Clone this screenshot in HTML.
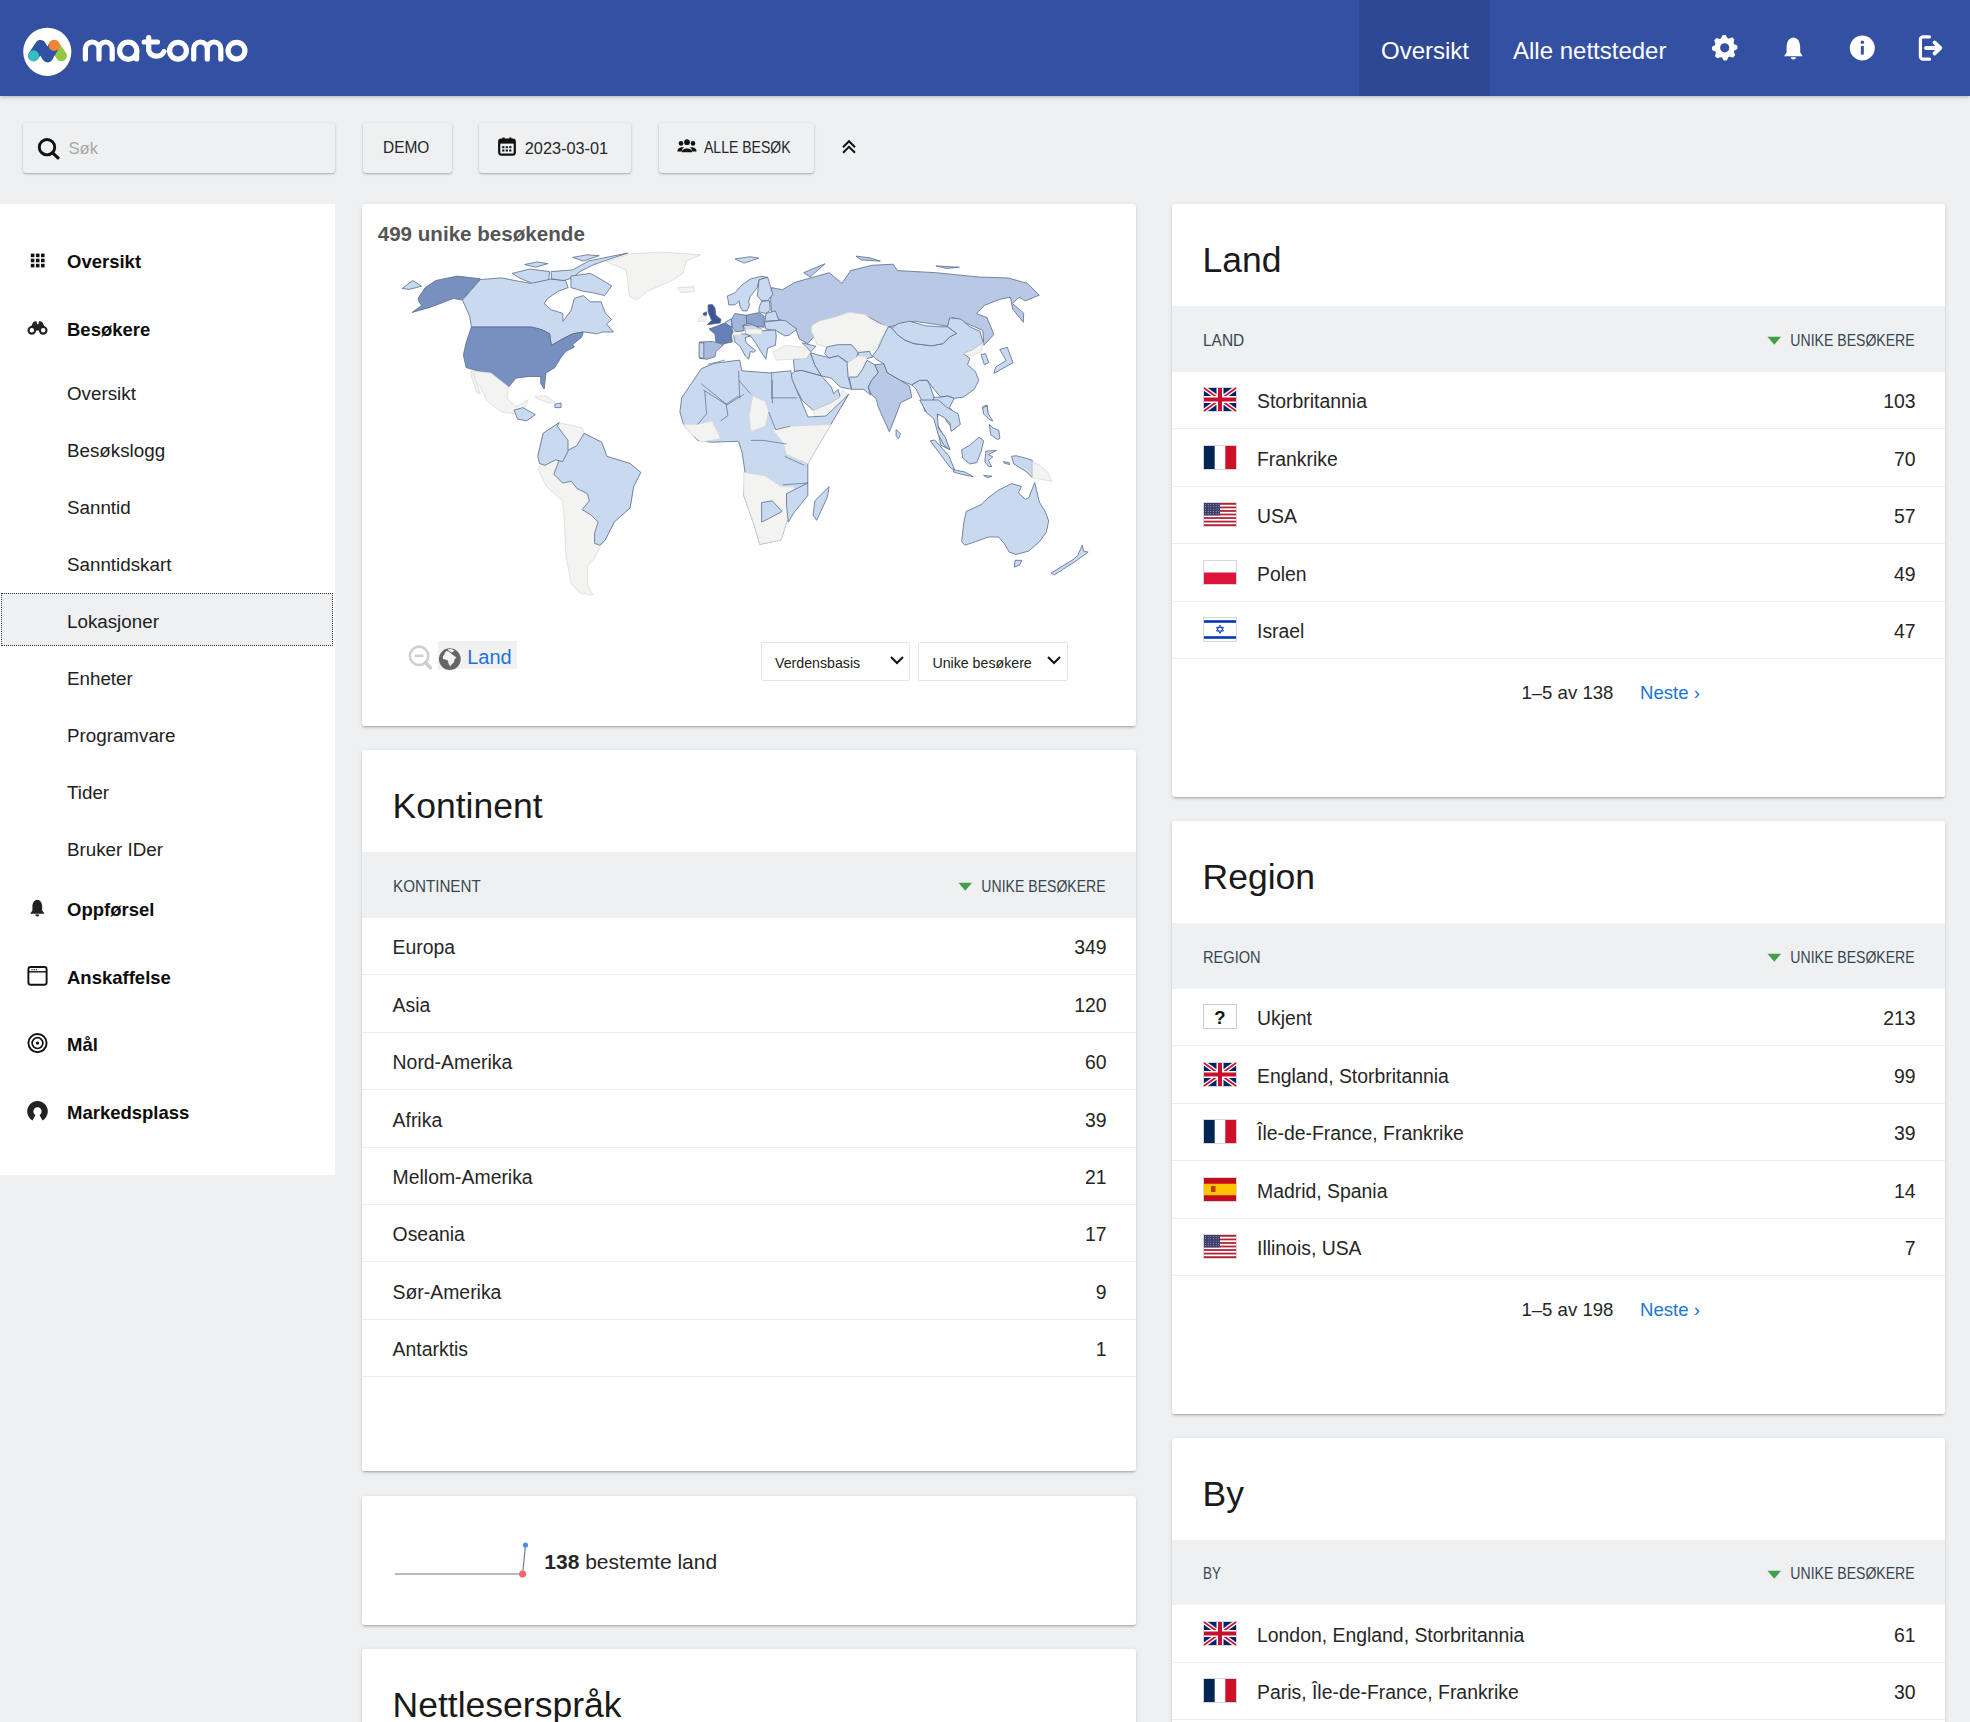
<!DOCTYPE html><html><head><meta charset="utf-8"><title>Matomo</title><style>
html,body{margin:0;padding:0;}
body{width:1970px;height:1722px;overflow:hidden;position:relative;background:#eef0f2;font-family:'Liberation Sans', sans-serif;}
.t{position:absolute;white-space:nowrap;}
.card{position:absolute;background:#fff;border-radius:3px;box-shadow:0 2px 2px 0 rgba(0,0,0,.10),0 3px 1px -2px rgba(0,0,0,.12),0 1px 5px 0 rgba(0,0,0,.10);}
.btn{position:absolute;background:#eef0f2;border-radius:3px;box-shadow:0 1px 3px rgba(0,0,0,.22),0 1px 1px rgba(0,0,0,.10);}
</style></head><body><div id="wrap" style="position:relative;width:1970px;height:1722px;overflow:hidden;background:#eef0f2">
<div style="position:absolute;left:0.00px;top:0.00px;width:1970.00px;height:96.00px;background:#3450a3;box-shadow:0 1px 4px rgba(0,0,0,.25);z-index:1"></div>
<div style="position:absolute;left:1358.50px;top:0.00px;width:131.00px;height:96.00px;background:#2f4893;z-index:1"></div>
<svg style="position:absolute;left:0.00px;top:0.00px;z-index:2" width="260" height="96" viewBox="0 0 260 96"><circle cx="47.3" cy="51.8" r="24.1" fill="#fff"/>
<line x1="54.2" y1="45.4" x2="61.5" y2="55.8" stroke="#95c748" stroke-width="10.9" stroke-linecap="round"/>
<polyline points="33.6,55.8 40.4,45.4 47.5,57 53.2,47.2" fill="none" stroke="#3152a2" stroke-width="10.9" stroke-linecap="round" stroke-linejoin="round"/>
<circle cx="33.6" cy="55.8" r="5.5" fill="#35bfc0"/>
<circle cx="54.2" cy="45.4" r="5.6" fill="#f38334"/>
<g fill="none" stroke="#fff" stroke-width="5.2" stroke-linecap="round" stroke-linejoin="round">
<path d="M85.4,59 V48.8 A6.8,6.8 0 0 1 99,48.8 V59 M99,48.8 A6.6,6.8 0 0 1 112.2,48.8 V59"/>
<circle cx="128.2" cy="50.7" r="8.6"/><path d="M136.6,50.7 V59"/>
<path d="M148.7,37.6 V50.7 A8.3,8.3 0 0 0 164,51.5 M144.2,42 H157.5"/>
<circle cx="178" cy="50.7" r="8.4"/>
<path d="M193.7,59 V48.8 A6.8,6.8 0 0 1 207.3,48.8 V59 M207.3,48.8 A6.75,6.8 0 0 1 220.8,48.8 V59"/>
<circle cx="236.5" cy="50.7" r="8.4"/>
</g></svg>
<div class="t" style="left:1381.00px;top:35.68px;font-size:24px;line-height:29px;font-weight:400;color:#fff;z-index:2">Oversikt</div>
<div class="t" style="left:1513.00px;top:35.68px;font-size:24px;line-height:29px;font-weight:400;color:#fff;z-index:2">Alle nettsteder</div>
<svg style="position:absolute;left:0.00px;top:0.00px;z-index:2" width="1970" height="96" viewBox="0 0 1970 96"><path d="M1722.91,35.73 L1725.30,35.61 L1727.01,38.57 L1728.77,39.20 L1731.97,38.00 L1733.74,39.61 L1732.86,42.91 L1733.66,44.59 L1736.77,46.01 L1736.89,48.40 L1733.93,50.11 L1733.30,51.87 L1734.50,55.07 L1732.89,56.84 L1729.59,55.96 L1727.91,56.76 L1726.49,59.87 L1724.10,59.99 L1722.39,57.03 L1720.63,56.40 L1717.43,57.60 L1715.66,55.99 L1716.54,52.69 L1715.74,51.01 L1712.63,49.59 L1712.51,47.20 L1715.47,45.49 L1716.10,43.73 L1714.90,40.53 L1716.51,38.76 L1719.81,39.64 L1721.49,38.84 Z" fill="#fff" stroke="#fff" stroke-width="1.2" stroke-linejoin="round"/><circle cx="1724.7" cy="47.8" r="4.6" fill="#3450a3"/><path d="M1793.4,37.5 C1787.8,38.2 1786.6,42.8 1786.6,48.5 L1786.6,52.5 L1784,56.2 L1802.8,56.2 L1800.2,52.5 L1800.2,48.5 C1800.2,42.8 1799,38.2 1793.4,37.5 Z" fill="#fff"/><path d="M1790.8,57.2 A2.6,2.3 0 0 0 1796,57.2 Z" fill="#fff"/><circle cx="1862.3" cy="48" r="12.5" fill="#fff"/><rect x="1860.9" y="46" width="2.9" height="8.6" fill="#3450a3"/><circle cx="1862.35" cy="42.3" r="1.7" fill="#3450a3"/><path d="M1929.5,36.8 H1923 A2.6,2.6 0 0 0 1920.4,39.4 V56.6 A2.6,2.6 0 0 0 1923,59.2 H1929.5" fill="none" stroke="#fff" stroke-width="3.2" stroke-linecap="round"/><path d="M1926,48 H1939 M1934.5,42.5 L1940.3,48 L1934.5,53.5" fill="none" stroke="#fff" stroke-width="3.8" stroke-linecap="round" stroke-linejoin="round"/></svg>
<div class="btn" style="left:23px;top:123px;width:312px;height:50px;"></div>
<svg style="position:absolute;left:30.00px;top:130.00px;" width="40" height="40" viewBox="0 0 40 40"><circle cx="17" cy="17.2" r="7.7" fill="none" stroke="#111" stroke-width="2.9"/><path d="M22.6,22.8 L28,27.8" stroke="#111" stroke-width="3.2" stroke-linecap="round"/></svg>
<div class="t" style="left:68.50px;top:139.05px;font-size:16.6px;line-height:20px;font-weight:400;color:#a8a8a8;">Søk</div>
<div class="btn" style="left:362.7px;top:122.7px;width:89.6px;height:50.3px;"></div>
<div class="t" style="left:382.60px;top:138.41px;font-size:17.0px;line-height:20px;font-weight:400;color:#262626;transform:scaleX(0.9098);transform-origin:left center;">DEMO</div>
<div class="btn" style="left:478.7px;top:122.7px;width:152.1px;height:50.3px;"></div>
<svg style="position:absolute;left:497.00px;top:136.00px;" width="22" height="22" viewBox="0 0 22 22"><rect x="2.2" y="3.6" width="15.6" height="15" rx="2" fill="none" stroke="#111" stroke-width="2.2"/><rect x="2.2" y="3.6" width="15.6" height="4" fill="#111"/><rect x="5.5" y="1.5" width="2.2" height="4" fill="#111"/><rect x="12.3" y="1.5" width="2.2" height="4" fill="#111"/><rect x="5.2" y="10.2" width="2.2" height="2" fill="#111"/><rect x="5.2" y="13.5" width="2.2" height="2" fill="#111"/><rect x="8.7" y="10.2" width="2.2" height="2" fill="#111"/><rect x="8.7" y="13.5" width="2.2" height="2" fill="#111"/><rect x="12.2" y="10.2" width="2.2" height="2" fill="#111"/><rect x="12.2" y="13.5" width="2.2" height="2" fill="#111"/></svg>
<div class="t" style="left:524.80px;top:138.35px;font-size:16.3px;line-height:20px;font-weight:400;color:#262626;">2023-03-01</div>
<div class="btn" style="left:659px;top:122.7px;width:155px;height:50.3px;"></div>
<svg style="position:absolute;left:676.00px;top:136.00px;" width="22" height="22" viewBox="0 0 22 22"><circle cx="11" cy="6.2" r="2.9" fill="#111"/><circle cx="5" cy="7.4" r="2.3" fill="#111"/><circle cx="17" cy="7.4" r="2.3" fill="#111"/><path d="M5.8,16.2 C5.8,11.2 16.2,11.2 16.2,16.2 Z" fill="#111"/><path d="M1.4,15.4 C1.4,11 6.8,10.6 8,11.6 C6.6,12.6 5.8,14 5.8,15.4 Z" fill="#111"/><path d="M20.6,15.4 C20.6,11 15.2,10.6 14,11.6 C15.4,12.6 16.2,14 16.2,15.4 Z" fill="#111"/></svg>
<div class="t" style="left:704.40px;top:138.41px;font-size:17.0px;line-height:20px;font-weight:400;color:#262626;transform:scaleX(0.8256);transform-origin:left center;">ALLE BESØK</div>
<svg style="position:absolute;left:838.00px;top:136.00px;" width="22" height="22" viewBox="0 0 22 22"><path d="M5,11.2 L11,5.2 L17,11.2 M5,16.8 L11,10.8 L17,16.8" fill="none" stroke="#111" stroke-width="2" stroke-linecap="butt" stroke-linejoin="miter"/></svg>
<div style="position:absolute;left:0.00px;top:204.00px;width:335.00px;height:971.40px;background:#fff"></div>
<div style="position:absolute;left:1.00px;top:593.00px;width:332.00px;height:53.00px;background:#eef0f2;outline:1px dotted #333;outline-offset:-1px"></div>
<div class="t" style="left:67.00px;top:251.39px;font-size:18.5px;line-height:22px;font-weight:700;color:#0d0d0d;">Oversikt</div>
<div class="t" style="left:67.00px;top:319.29px;font-size:18.5px;line-height:22px;font-weight:700;color:#0d0d0d;">Besøkere</div>
<div class="t" style="left:67.00px;top:899.29px;font-size:18.5px;line-height:22px;font-weight:700;color:#0d0d0d;">Oppførsel</div>
<div class="t" style="left:67.00px;top:967.19px;font-size:18.5px;line-height:22px;font-weight:700;color:#0d0d0d;">Anskaffelse</div>
<div class="t" style="left:67.00px;top:1034.49px;font-size:18.5px;line-height:22px;font-weight:700;color:#0d0d0d;">Mål</div>
<div class="t" style="left:67.00px;top:1102.39px;font-size:18.5px;line-height:22px;font-weight:700;color:#0d0d0d;">Markedsplass</div>
<div class="t" style="left:67.00px;top:381.99px;font-size:18.8px;line-height:23px;font-weight:400;color:#212121;">Oversikt</div>
<div class="t" style="left:67.00px;top:438.99px;font-size:18.8px;line-height:23px;font-weight:400;color:#212121;">Besøkslogg</div>
<div class="t" style="left:67.00px;top:495.99px;font-size:18.8px;line-height:23px;font-weight:400;color:#212121;">Sanntid</div>
<div class="t" style="left:67.00px;top:552.99px;font-size:18.8px;line-height:23px;font-weight:400;color:#212121;">Sanntidskart</div>
<div class="t" style="left:67.00px;top:609.99px;font-size:18.8px;line-height:23px;font-weight:400;color:#212121;">Lokasjoner</div>
<div class="t" style="left:67.00px;top:666.99px;font-size:18.8px;line-height:23px;font-weight:400;color:#212121;">Enheter</div>
<div class="t" style="left:67.00px;top:723.99px;font-size:18.8px;line-height:23px;font-weight:400;color:#212121;">Programvare</div>
<div class="t" style="left:67.00px;top:780.99px;font-size:18.8px;line-height:23px;font-weight:400;color:#212121;">Tider</div>
<div class="t" style="left:67.00px;top:837.99px;font-size:18.8px;line-height:23px;font-weight:400;color:#212121;">Bruker IDer</div>
<svg style="position:absolute;left:0.00px;top:0.00px;" width="60" height="1200" viewBox="0 0 60 1200"><rect x="30.80" y="253.60" width="3.6" height="3.6" fill="#111"/><rect x="30.80" y="258.70" width="3.6" height="3.6" fill="#111"/><rect x="30.80" y="263.80" width="3.6" height="3.6" fill="#111"/><rect x="35.90" y="253.60" width="3.6" height="3.6" fill="#111"/><rect x="35.90" y="258.70" width="3.6" height="3.6" fill="#111"/><rect x="35.90" y="263.80" width="3.6" height="3.6" fill="#111"/><rect x="41.00" y="253.60" width="3.6" height="3.6" fill="#111"/><rect x="41.00" y="258.70" width="3.6" height="3.6" fill="#111"/><rect x="41.00" y="263.80" width="3.6" height="3.6" fill="#111"/><path d="M29.2,330.5 L33,322.6 Q34.3,320.8 36.4,321.2 L37.2,324.2 L38.3,324.2 L39.1,321.2 Q41.2,320.8 42.5,322.6 L46.3,330.5 Z" fill="#222"/><circle cx="31.8" cy="330.3" r="3.3" fill="#fff" stroke="#222" stroke-width="2.1"/><circle cx="43.2" cy="330.3" r="3.3" fill="#fff" stroke="#222" stroke-width="2.1"/><path d="M37.3,899.8 C33.3,900.4 32.4,903.6 32.4,907.6 L32.4,910.4 L30,913.8 L44.6,913.8 L42.2,910.4 L42.2,907.6 C42.2,903.6 41.3,900.4 37.3,899.8 Z" fill="#222"/><path d="M35.3,914.6 A2,1.9 0 0 0 39.3,914.6 Z" fill="#222"/><rect x="28.4" y="967" width="18.2" height="17.8" rx="2.2" fill="none" stroke="#111" stroke-width="1.9"/><line x1="28.4" y1="971.8" x2="46.6" y2="971.8" stroke="#111" stroke-width="1.4"/><rect x="31.5" y="969.1" width="1.2" height="1.2" fill="#111"/><rect x="33.7" y="969.1" width="1.2" height="1.2" fill="#111"/><rect x="35.9" y="969.1" width="1.2" height="1.2" fill="#111"/><circle cx="37.5" cy="1043.1" r="9.1" fill="none" stroke="#111" stroke-width="1.9"/><circle cx="37.5" cy="1043.1" r="5.4" fill="none" stroke="#111" stroke-width="1.7"/><circle cx="37.5" cy="1043.1" r="1.7" fill="#111"/><path d="M32.5,1120.4 A10.3,10.3 0 1 1 42.5,1120.4 L39.5,1115 A4.12,4.12 0 1 0 35.5,1115 Z" fill="#222"/></svg>
<div class="card" style="left:362px;top:204px;width:774px;height:522px;"></div>
<div class="t" style="left:377.70px;top:221.36px;font-size:20.6px;line-height:25px;font-weight:700;color:#555;">499 unike besøkende</div>
<svg style="position:absolute;left:0.00px;top:0.00px;pointer-events:none" width="1970" height="1722" viewBox="0 0 1970 1722"><polygon points="606.4,261.9 629.5,253.9 661.5,252.1 700.6,254.8 686.3,261.0 682.8,273.4 672.1,280.5 647.3,291.2 636.6,300.1 629.5,296.5 627.7,280.5 625.9,269.9" fill="#f3f3f1" stroke="#d9d9d6" stroke-width="0.8" stroke-linejoin="round"/><polygon points="677.5,287.6 693.5,286.7 694.3,291.5 681.0,292.6" fill="#f3f3f1" stroke="#d9d9d6" stroke-width="0.8" stroke-linejoin="round"/><polygon points="418.1,298.3 425.2,287.6 435.9,280.5 457.2,276.1 480.3,278.8 461.6,300.1 453.6,298.3 444.7,301.8 430.5,307.2 411.9,312.5 421.6,305.4 419.0,301.8" fill="#7790bf" stroke="#5a6c8c" stroke-width="0.8" stroke-linejoin="round"/><polygon points="402.1,288.5 412.8,280.5 421.6,286.2 416.3,287.6 409.2,289.4" fill="#c9d9ef" stroke="#5a6c8c" stroke-width="0.8" stroke-linejoin="round"/><polygon points="480.3,279.6 501.6,277.9 519.4,281.4 530.0,283.2 546.0,278.8 565.5,280.5 568.2,287.6 558.4,291.2 547.8,298.3 544.2,303.6 551.3,309.8 562.9,313.4 562.9,321.4 570.9,310.7 574.4,298.3 583.3,295.6 590.4,301.8 601.1,301.8 605.5,313.4 611.7,319.6 606.4,324.1 613.5,332.0 602.0,332.0 597.5,333.8 583.3,332.0 572.7,333.8 562.0,339.2 551.3,345.4 549.6,333.8 542.5,329.9 531.8,327.1 471.4,327.1 469.6,316.1 462.5,300.1" fill="#c9d9ef" stroke="#5a6c8c" stroke-width="0.8" stroke-linejoin="round"/><polygon points="512.2,273.4 530.0,269.0 549.6,271.6 548.7,279.6 531.8,283.2 519.4,277.9" fill="#c9d9ef" stroke="#5a6c8c" stroke-width="0.8" stroke-linejoin="round"/><polygon points="551.3,271.6 572.7,269.9 588.6,261.0 627.7,253.0 594.0,264.5 579.8,271.6 572.7,277.9 563.8,280.5 551.3,278.8" fill="#c9d9ef" stroke="#5a6c8c" stroke-width="0.8" stroke-linejoin="round"/><polygon points="570.9,276.1 590.4,273.4 602.9,280.5 611.7,285.9 604.6,295.6 594.0,293.0 583.3,291.2 570.9,287.6" fill="#c9d9ef" stroke="#5a6c8c" stroke-width="0.8" stroke-linejoin="round"/><polygon points="524.7,264.5 537.1,261.9 547.8,263.7 535.3,267.2" fill="#c9d9ef" stroke="#5a6c8c" stroke-width="0.8" stroke-linejoin="round"/><polygon points="572.7,257.4 586.9,254.8 599.3,255.7 583.3,261.0" fill="#c9d9ef" stroke="#5a6c8c" stroke-width="0.8" stroke-linejoin="round"/><polygon points="471.4,327.1 531.8,327.1 542.5,329.9 549.6,333.8 551.3,345.4 562.0,339.2 572.7,333.8 583.3,332.0 581.5,337.4 572.7,344.5 574.4,347.1 565.5,351.6 560.2,358.7 554.9,367.6 546.0,372.9 544.2,388.9 540.7,383.6 540.7,376.5 528.2,376.5 515.8,378.2 508.7,387.1 499.8,380.0 490.9,372.9 478.5,371.1 466.1,367.6 463.4,355.1 466.1,342.7" fill="#7790bf" stroke="#5a6c8c" stroke-width="0.8" stroke-linejoin="round"/><polygon points="471.4,371.1 490.9,372.9 499.8,380.0 508.7,387.1 506.9,397.8 515.8,406.7 528.2,399.6 522.9,412.0 515.8,413.8 501.6,412.0 487.4,401.3 480.3,387.1 471.4,376.5" fill="#f3f3f1" stroke="#d9d9d6" stroke-width="0.8" stroke-linejoin="round"/><polygon points="470.5,372.9 473.2,372.9 480.3,394.2 476.7,392.5" fill="#f3f3f1" stroke="#d9d9d6" stroke-width="0.8" stroke-linejoin="round"/><polygon points="535.3,396.0 546.0,396.0 554.9,402.2 549.6,403.1 537.1,398.7" fill="#f3f3f1" stroke="#d9d9d6" stroke-width="0.8" stroke-linejoin="round"/><polygon points="514.0,410.2 522.9,407.6 535.3,414.7 526.5,420.9 517.6,419.1" fill="#c9d9ef" stroke="#5a6c8c" stroke-width="0.8" stroke-linejoin="round"/><polygon points="554.9,404.0 561.1,403.1 561.1,407.6 554.9,407.6" fill="#c9d9ef" stroke="#5a6c8c" stroke-width="0.8" stroke-linejoin="round"/><polygon points="735.0,258.9 750.4,256.7 758.9,258.2 744.0,263.1" fill="#c9d9ef" stroke="#5a6c8c" stroke-width="0.8" stroke-linejoin="round"/><polygon points="771.7,287.6 782.3,289.8 795.1,282.3 829.3,272.7 842.0,283.4 850.6,270.6 871.9,265.3 893.2,264.2 897.5,270.6 935.9,272.7 978.5,277.0 1008.4,278.0 1027.5,283.4 1039.3,295.1 1025.4,300.9 1019.0,297.2 1012.6,303.6 1023.7,313.2 1023.3,322.2 1012.6,309.0 1010.5,297.2 999.8,299.4 984.9,305.1 976.4,313.7 987.0,317.5 993.9,334.6 983.8,345.2 982.8,330.3 952.9,317.5 949.1,326.4 914.5,321.3 893.2,326.0 886.8,327.1 869.8,317.5 850.6,313.2 829.3,319.6 811.1,325.6 813.9,336.7 807.9,343.5 799.4,339.2 796.2,330.3 784.5,321.8 771.7,315.4 770.6,300.4" fill="#b9c9e5" stroke="#5a6c8c" stroke-width="0.8" stroke-linejoin="round"/><polygon points="803.7,272.7 825.0,263.8 810.1,277.0" fill="#b9c9e5" stroke="#5a6c8c" stroke-width="0.8" stroke-linejoin="round"/><polygon points="855.9,256.1 869.8,257.8 880.4,261.2 861.2,259.9" fill="#b9c9e5" stroke="#5a6c8c" stroke-width="0.8" stroke-linejoin="round"/><polygon points="935.9,265.9 959.3,267.2 946.5,268.5" fill="#b9c9e5" stroke="#5a6c8c" stroke-width="0.8" stroke-linejoin="round"/><polygon points="999.8,349.5 1007.3,347.3 1013.0,362.7 993.9,373.4 995.6,367.0 1006.2,360.6" fill="#c9d9ef" stroke="#5a6c8c" stroke-width="0.8" stroke-linejoin="round"/><polygon points="982.8,407.0 987.0,404.9 988.1,415.6 983.8,413.4" fill="#c9d9ef" stroke="#5a6c8c" stroke-width="0.8" stroke-linejoin="round"/><polygon points="811.3,325.7 819.1,321.2 835.8,316.8 849.2,312.3 864.9,314.5 874.9,322.3 888.3,326.8 885.0,333.5 880.5,339.1 878.3,346.9 869.3,352.5 858.2,352.5 851.5,344.7 838.1,344.7 828.0,346.9 816.9,344.7 814.6,338.0 811.3,331.3" fill="#f3f3f1" stroke="#d9d9d6" stroke-width="0.8" stroke-linejoin="round"/><polygon points="826.9,346.9 838.1,344.7 851.5,344.7 858.2,352.5 855.9,358.1 848.1,362.5 838.1,355.8 829.1,358.1 824.7,353.6" fill="#c9d9ef" stroke="#5a6c8c" stroke-width="0.8" stroke-linejoin="round"/><polygon points="858.2,352.5 869.3,351.4 872.7,357.0 864.9,359.2 858.2,358.1" fill="#c9d9ef" stroke="#5a6c8c" stroke-width="0.8" stroke-linejoin="round"/><polygon points="848.1,362.5 858.2,355.8 867.1,357.0 864.9,362.5 862.6,369.2 857.1,377.1 849.2,377.1 847.0,367.0" fill="#f3f3f1" stroke="#d9d9d6" stroke-width="0.8" stroke-linejoin="round"/><polygon points="849.2,377.1 857.1,377.1 862.6,369.2 867.1,360.3 874.9,364.8 878.3,372.6 871.6,380.4 868.2,387.1 870.5,394.9 863.8,389.3 851.5,389.3" fill="#c9d9ef" stroke="#5a6c8c" stroke-width="0.8" stroke-linejoin="round"/><polygon points="810.2,352.5 816.9,354.7 826.9,357.0 829.1,358.1 838.1,355.8 847.0,362.5 848.1,377.1 851.5,389.3 840.3,387.1 831.4,378.2 821.3,375.9 814.6,364.8" fill="#c9d9ef" stroke="#5a6c8c" stroke-width="0.8" stroke-linejoin="round"/><polygon points="793.4,359.2 806.8,358.1 810.2,352.5 814.6,364.8 821.3,375.9 801.2,370.4 794.5,371.5" fill="#c9d9ef" stroke="#5a6c8c" stroke-width="0.8" stroke-linejoin="round"/><polygon points="787.8,377.1 794.5,371.5 801.2,370.4 821.3,375.9 831.4,387.1 833.6,393.8 838.1,389.3 840.3,397.2 831.4,402.7 813.5,410.6 802.3,400.5 793.4,383.8" fill="#c9d9ef" stroke="#5a6c8c" stroke-width="0.8" stroke-linejoin="round"/><polygon points="813.5,410.6 831.4,402.7 840.3,397.2 842.5,389.3 848.1,396.0 838.1,411.7 815.7,420.6" fill="#f3f3f1" stroke="#d9d9d6" stroke-width="0.8" stroke-linejoin="round"/><polygon points="874.9,364.8 883.9,363.7 887.2,372.6 900.6,380.4 909.5,386.0 911.8,397.2 900.6,402.7 896.1,415.0 889.4,431.8 878.3,407.2 876.0,398.3 871.6,394.9 868.2,387.1 871.6,380.4 878.3,372.6" fill="#b9c9e5" stroke="#5a6c8c" stroke-width="0.8" stroke-linejoin="round"/><polygon points="896.1,429.5 900.6,434.0 898.4,438.5 896.1,436.2" fill="#c9d9ef" stroke="#5a6c8c" stroke-width="0.8" stroke-linejoin="round"/><polygon points="872.7,355.8 878.3,348.0 882.7,338.0 888.3,326.8 891.7,327.9 897.3,334.6 905.1,340.2 914.0,343.6 931.9,345.8 943.0,343.6 949.7,336.9 956.4,333.5 947.5,326.8 949.7,317.9 960.9,319.0 969.8,326.8 979.9,331.3 983.2,342.4 972.1,350.3 963.1,353.6 969.8,358.1 967.6,364.8 975.4,371.5 978.8,380.4 974.3,389.3 963.1,397.2 954.2,398.3 947.5,396.0 940.8,397.2 934.1,389.3 927.4,380.4 919.6,380.4 911.8,384.9 900.6,380.4 887.2,372.6 883.9,363.7 876.0,359.2" fill="#c9d9ef" stroke="#5a6c8c" stroke-width="0.8" stroke-linejoin="round"/><polygon points="891.7,327.9 898.4,323.5 909.5,321.2 925.2,325.7 940.8,326.8 947.5,326.8 956.4,333.5 949.7,336.9 943.0,343.6 931.9,345.8 914.0,343.6 905.1,340.2 897.3,334.6" fill="#c9d9ef" stroke="#5a6c8c" stroke-width="0.8" stroke-linejoin="round"/><polygon points="911.8,384.9 919.6,380.4 927.4,380.4 929.6,384.9 934.1,397.2 931.9,402.7 925.2,411.7 920.7,398.3 916.2,389.3" fill="#c9d9ef" stroke="#5a6c8c" stroke-width="0.8" stroke-linejoin="round"/><polygon points="934.1,397.2 940.8,397.2 947.5,396.0 954.2,398.3 949.7,407.2 958.7,420.6 954.2,429.5 947.5,422.8 944.2,416.1 939.7,407.2 936.3,422.8 945.3,438.5 949.7,449.6 940.8,445.2 936.3,422.8 931.9,402.7" fill="#c9d9ef" stroke="#5a6c8c" stroke-width="0.8" stroke-linejoin="round"/><polygon points="981.0,354.7 985.5,353.6 988.8,362.5 984.4,364.8" fill="#c9d9ef" stroke="#5a6c8c" stroke-width="0.8" stroke-linejoin="round"/><polygon points="963.1,353.6 972.1,350.3 983.2,342.4 981.0,351.4 972.1,355.8" fill="#f3f3f1" stroke="#d9d9d6" stroke-width="0.8" stroke-linejoin="round"/><polygon points="727.1,296.2 734.9,292.8 741.8,285.0 750.4,279.0 760.8,276.4 767.7,277.3 759.0,279.8 757.3,287.6 750.4,296.2 748.7,301.4 749.5,304.9 747.0,310.9 742.6,310.9 740.1,306.6 739.2,300.6 734.9,304.9 728.8,304.9 728.0,299.7" fill="#c9d9ef" stroke="#5a6c8c" stroke-width="0.8" stroke-linejoin="round"/><polygon points="759.0,279.8 767.7,277.3 772.8,294.5 767.7,300.6 761.6,300.6 757.3,296.2 758.2,288.5" fill="#c9d9ef" stroke="#5a6c8c" stroke-width="0.8" stroke-linejoin="round"/><polygon points="761.6,301.4 769.4,300.6 770.3,310.1 765.9,313.5 759.0,311.8 759.0,307.5" fill="#c9d9ef" stroke="#5a6c8c" stroke-width="0.8" stroke-linejoin="round"/><polygon points="765.9,313.5 775.4,310.9 778.9,320.4 765.1,321.3" fill="#c9d9ef" stroke="#5a6c8c" stroke-width="0.8" stroke-linejoin="round"/><polygon points="764.2,322.1 778.9,320.4 784.9,320.4 797.0,329.0 789.2,335.1 784.9,335.9 776.3,330.8 765.9,329.0" fill="#c9d9ef" stroke="#5a6c8c" stroke-width="0.8" stroke-linejoin="round"/><polygon points="742.6,325.6 753.9,324.7 756.4,326.4 761.6,329.0 761.6,330.8 775.4,329.9 776.3,335.9 775.4,345.4 767.7,348.0 765.9,359.2 760.8,351.5 755.6,342.8 750.4,335.9 746.1,335.1 745.2,329.0" fill="#c9d9ef" stroke="#5a6c8c" stroke-width="0.8" stroke-linejoin="round"/><polygon points="745.2,329.0 761.6,329.0 761.6,334.2 746.1,334.2" fill="#f3f3f1" stroke="#d9d9d6" stroke-width="0.8" stroke-linejoin="round"/><polygon points="733.1,333.4 746.1,334.2 750.4,335.9 745.2,337.7 746.1,342.8 755.6,350.6 753.9,352.3 750.4,351.5 748.7,359.2 745.2,355.8 740.1,346.3 734.9,342.0" fill="#c9d9ef" stroke="#5a6c8c" stroke-width="0.8" stroke-linejoin="round"/><polygon points="732.3,331.6 741.8,331.6 740.9,335.1 732.3,335.1" fill="#f3f3f1" stroke="#d9d9d6" stroke-width="0.8" stroke-linejoin="round"/><polygon points="725.4,322.1 731.4,318.7 732.3,327.3 728.0,325.6" fill="#c9d9ef" stroke="#5a6c8c" stroke-width="0.8" stroke-linejoin="round"/><polygon points="731.4,319.5 734.9,313.5 746.1,315.2 747.0,323.9 742.6,325.6 744.4,330.8 735.7,331.6 732.3,327.3" fill="#a2b5da" stroke="#5a6c8c" stroke-width="0.8" stroke-linejoin="round"/><polygon points="746.1,315.2 759.0,312.6 764.2,316.1 764.2,327.3 756.4,326.4 750.4,323.9 747.0,323.9" fill="#8ca2cf" stroke="#5a6c8c" stroke-width="0.8" stroke-linejoin="round"/><polygon points="698.6,319.5 702.9,315.2 706.4,317.0 704.7,321.3 698.6,321.3" fill="#f3f3f1" stroke="#d9d9d6" stroke-width="0.8" stroke-linejoin="round"/><polygon points="708.1,304.9 712.4,304.4 715.0,308.3 715.9,315.2 721.1,319.5 720.2,323.0 707.3,324.7 711.6,320.4 709.8,316.1 708.1,311.8" fill="#3b5796" stroke="#5a6c8c" stroke-width="0.8" stroke-linejoin="round"/><polygon points="702.9,313.5 706.4,311.8 706.8,315.2 703.8,315.2" fill="#3b5796" stroke="#5a6c8c" stroke-width="0.8" stroke-linejoin="round"/><polygon points="709.0,329.0 718.5,325.6 724.5,323.0 731.4,327.3 733.1,331.6 731.4,335.1 732.3,342.0 723.7,343.7 715.9,342.0 715.0,334.2" fill="#6580b6" stroke="#5a6c8c" stroke-width="0.8" stroke-linejoin="round"/><polygon points="699.5,342.0 712.4,341.5 723.7,344.6 715.9,351.5 715.0,356.7 707.3,359.2 699.5,358.4" fill="#abbddf" stroke="#5a6c8c" stroke-width="0.8" stroke-linejoin="round"/><polygon points="699.1,342.8 703.8,342.8 703.8,358.4 699.1,357.5" fill="#c9d9ef" stroke="#5a6c8c" stroke-width="0.8" stroke-linejoin="round"/><polygon points="772.8,352.3 784.9,345.4 802.2,347.2 810.8,351.5 806.5,358.4 776.3,360.1" fill="#f3f3f1" stroke="#d9d9d6" stroke-width="0.8" stroke-linejoin="round"/><polygon points="802.2,342.8 816.0,346.3 810.8,351.5" fill="#c9d9ef" stroke="#5a6c8c" stroke-width="0.8" stroke-linejoin="round"/><polygon points="537.8,468.8 544.9,456.4 537.8,454.6 543.1,433.3 559.1,422.6 582.2,428.0 584.0,433.3 601.7,442.2 607.0,456.4 630.1,463.5 640.8,472.4 633.7,486.6 630.1,507.9 614.2,522.1 605.3,539.9 599.9,547.0 594.6,557.7 587.5,566.5 587.5,584.3 592.8,595.0 580.4,593.2 571.5,584.3 566.2,557.7 564.4,522.1 562.6,500.8 546.6,486.6" fill="#f3f3f1" stroke="#d9d9d6" stroke-width="0.8" stroke-linejoin="round"/><polygon points="553.8,474.2 562.6,451.1 568.0,450.2 576.8,445.7 584.0,433.3 601.7,442.2 607.0,456.4 630.1,463.5 640.8,472.4 633.7,486.6 630.1,507.9 614.2,522.1 605.3,539.9 599.9,545.2 594.6,543.4 594.6,532.8 598.2,522.1 591.1,515.0 582.2,509.7 589.3,500.8 587.5,493.7 576.8,488.4 571.5,481.3 562.6,483.0" fill="#c9d9ef" stroke="#5a6c8c" stroke-width="0.8" stroke-linejoin="round"/><polygon points="537.8,456.4 543.1,433.3 559.1,422.6 557.3,426.2 568.0,440.4 568.0,451.1 562.6,461.7 555.5,459.9 544.9,465.3 539.5,463.5" fill="#c9d9ef" stroke="#5a6c8c" stroke-width="0.8" stroke-linejoin="round"/><polygon points="681.7,397.8 701.3,368.7 714.1,363.3 739.7,360.1 741.8,370.8 769.6,372.9 790.9,370.8 792.0,379.0 808.0,417.0 826.0,416.0 848.7,394.2 830.9,424.4 807.8,463.5 807.8,483.0 797.1,504.4 786.5,522.1 781.1,539.9 759.8,544.3 754.5,525.7 743.8,495.5 745.0,472.0 742.0,452.0 738.5,441.3 711.9,442.2 697.7,440.4 683.4,424.4 679.9,412.0" fill="#c9d9ef" stroke="#5a6c8c" stroke-width="0.8" stroke-linejoin="round"/><polygon points="743.8,472.4 765.2,475.9 781.1,486.6 793.6,486.6 797.1,504.4 786.5,522.1 781.1,539.9 759.8,544.3 754.5,525.7 743.8,495.5" fill="#f3f3f1" stroke="#d9d9d6" stroke-width="0.8" stroke-linejoin="round"/><polygon points="761.6,502.6 772.3,500.8 782.0,511.5 768.7,518.6 761.6,522.1" fill="#c9d9ef" stroke="#5a6c8c" stroke-width="0.8" stroke-linejoin="round"/><polygon points="786.5,493.7 807.8,483.0 807.8,495.5 793.6,513.2 788.3,522.1 786.5,504.4" fill="#c9d9ef" stroke="#5a6c8c" stroke-width="0.8" stroke-linejoin="round"/><polygon points="772.3,429.7 790.0,426.2 830.9,424.4 807.8,463.5 786.5,454.6 782.9,442.2" fill="#f3f3f1" stroke="#d9d9d6" stroke-width="0.8" stroke-linejoin="round"/><polygon points="752.7,396.0 765.2,401.3 768.7,412.0 765.2,426.2 750.9,431.5 749.2,415.5" fill="#f3f3f1" stroke="#d9d9d6" stroke-width="0.8" stroke-linejoin="round"/><polygon points="683.4,424.4 697.7,424.4 711.9,420.9 720.7,438.6 701.2,442.2 690.5,433.3" fill="#f3f3f1" stroke="#d9d9d6" stroke-width="0.8" stroke-linejoin="round"/><polygon points="814.9,500.8 829.1,486.6 827.3,497.2 816.7,520.3 813.1,515.0" fill="#c9d9ef" stroke="#5a6c8c" stroke-width="0.8" stroke-linejoin="round"/><polygon points="961.6,541.7 963.9,522.0 966.2,511.5 981.3,504.5 988.3,497.6 998.7,490.0 1011.5,483.6 1021.4,486.5 1018.5,492.9 1025.4,499.3 1028.9,497.6 1034.7,482.5 1039.4,502.2 1045.2,511.5 1048.7,520.8 1046.3,532.4 1039.4,541.7 1028.9,551.0 1016.1,554.5 1009.2,552.1 1004.5,544.0 998.7,537.0 988.3,537.0 975.5,541.7 965.0,545.2" fill="#c9d9ef" stroke="#5a6c8c" stroke-width="0.8" stroke-linejoin="round"/><polygon points="1015.0,560.3 1022.0,560.3 1019.6,564.9 1014.4,567.2" fill="#c9d9ef" stroke="#5a6c8c" stroke-width="0.8" stroke-linejoin="round"/><polygon points="1051.0,573.1 1071.9,560.3 1077.7,555.6 1082.3,545.2 1083.5,551.0 1088.2,552.1 1075.4,561.4 1054.5,574.8" fill="#c9d9ef" stroke="#5a6c8c" stroke-width="0.8" stroke-linejoin="round"/><polygon points="1011.5,456.3 1016.1,455.7 1025.4,458.1 1032.4,460.4 1032.4,477.8 1026.6,472.0 1013.8,463.9" fill="#c9d9ef" stroke="#5a6c8c" stroke-width="0.8" stroke-linejoin="round"/><polygon points="1032.4,461.6 1039.4,465.0 1047.5,472.0 1052.1,481.3 1045.2,480.1 1032.4,477.8" fill="#f3f3f1" stroke="#d9d9d6" stroke-width="0.8" stroke-linejoin="round"/><polygon points="961.6,449.9 969.7,445.3 979.0,437.2 983.6,440.7 981.3,451.1 976.7,462.7 969.7,463.9 962.7,458.1" fill="#c9d9ef" stroke="#5a6c8c" stroke-width="0.8" stroke-linejoin="round"/><polygon points="930.2,440.7 934.8,440.1 948.8,455.7 954.6,469.7 951.1,468.5 939.5,453.4" fill="#c9d9ef" stroke="#5a6c8c" stroke-width="0.8" stroke-linejoin="round"/><polygon points="953.4,469.7 965.0,472.0 973.2,476.7 961.6,474.3 953.4,472.0" fill="#c9d9ef" stroke="#5a6c8c" stroke-width="0.8" stroke-linejoin="round"/><polygon points="985.9,451.1 996.4,450.5 988.3,454.6 992.9,456.9 988.3,460.4 991.8,466.8 988.3,466.2 984.8,461.6" fill="#c9d9ef" stroke="#5a6c8c" stroke-width="0.8" stroke-linejoin="round"/><polygon points="982.5,407.0 987.1,406.4 988.3,413.9 992.9,420.9 989.4,419.7 983.6,413.9" fill="#c9d9ef" stroke="#5a6c8c" stroke-width="0.8" stroke-linejoin="round"/><polygon points="989.4,424.4 992.9,427.9 998.7,430.2 999.9,438.3 997.6,439.5 990.6,434.8" fill="#c9d9ef" stroke="#5a6c8c" stroke-width="0.8" stroke-linejoin="round"/><polygon points="919.7,400.0 938.3,400.0 946.5,407.0 958.1,413.9 960.4,424.4 951.1,431.4 949.9,423.2 944.1,417.4 937.2,413.9 938.3,427.9 945.3,437.2 949.9,449.9 944.1,445.3 938.3,434.8 933.7,418.6 926.7,412.8" fill="#c9d9ef" stroke="#5a6c8c" stroke-width="0.8" stroke-linejoin="round"/><polygon points="983.6,475.5 991.8,476.1 988.3,477.8" fill="#c9d9ef" stroke="#5a6c8c" stroke-width="0.8" stroke-linejoin="round"/><polygon points="1003.4,461.6 1009.2,462.7 1009.8,464.5 1004.5,463.3" fill="#c9d9ef" stroke="#5a6c8c" stroke-width="0.8" stroke-linejoin="round"/><polyline points="704.8,390.7 706.5,413.8 697.7,424.4" fill="none" stroke="#5a6c8c" stroke-width="0.7"/><polyline points="701.2,383.6 726.1,404.0 738.5,396.0" fill="none" stroke="#5a6c8c" stroke-width="0.7"/><polyline points="726.1,404.0 727.9,415.5 720.7,420.9" fill="none" stroke="#5a6c8c" stroke-width="0.7"/><polyline points="738.5,380.0 750.9,394.2" fill="none" stroke="#5a6c8c" stroke-width="0.7"/><polyline points="772.3,380.0 772.3,403.1" fill="none" stroke="#5a6c8c" stroke-width="0.7"/><polyline points="772.3,397.8 797.1,397.8" fill="none" stroke="#5a6c8c" stroke-width="0.7"/><polyline points="768.7,412.0 775.8,429.7 790.0,426.2" fill="none" stroke="#5a6c8c" stroke-width="0.7"/><polyline points="750.9,440.4 763.4,440.4 786.5,444.0" fill="none" stroke="#5a6c8c" stroke-width="0.7"/><polyline points="784.7,456.4 804.2,465.3" fill="none" stroke="#5a6c8c" stroke-width="0.7"/><polyline points="782.9,484.8 807.8,483.0" fill="none" stroke="#5a6c8c" stroke-width="0.7"/><polyline points="707.7,364.4 724.8,360.1" fill="none" stroke="#5a6c8c" stroke-width="0.7"/><polyline points="738.6,370.8 739.7,398.5" fill="none" stroke="#5a6c8c" stroke-width="0.7"/><polyline points="771.7,372.9 771.7,398.5" fill="none" stroke="#5a6c8c" stroke-width="0.7"/><polyline points="703.5,390.0 726.9,404.9 744.0,394.3" fill="none" stroke="#5a6c8c" stroke-width="0.7"/></svg>
<div style="position:absolute;left:438.40px;top:641.00px;width:78.20px;height:28.00px;background:#f1f1f1"></div>
<svg style="position:absolute;left:400.00px;top:635.00px;" width="60" height="45" viewBox="0 0 60 45"><circle cx="19.1" cy="20.8" r="9.2" fill="none" stroke="#cfcfcf" stroke-width="2.6"/><path d="M14.8,20.8 H23.4" stroke="#cfcfcf" stroke-width="2.6"/><path d="M25.6,27.6 L30.4,32.8" stroke="#cfcfcf" stroke-width="3.6" stroke-linecap="round"/></svg>
<svg style="position:absolute;left:430.00px;top:640.00px;" width="40" height="40" viewBox="0 0 40 40"><circle cx="19.8" cy="19.1" r="10.9" fill="#666"/><path d="M12.9,16.8 L14.6,13.4 L16.2,10.9 L19,11.5 L22.9,14.9 L26.4,17.6 L24.6,19.5 L23.8,22.5 L21.4,24.6 L20.5,26.4 L18.8,24.2 L17.8,20.6 L15.6,19.6 L13,19.1 Z" fill="#f4f4f4"/><path d="M17.5,9.2 L21.5,9 L24.5,10.8 L21.8,12.4 L18.6,10.6 Z" fill="#f4f4f4"/></svg>
<div class="t" style="left:467.20px;top:644.87px;font-size:20px;line-height:24px;font-weight:400;color:#1f72d8;">Land</div>
<div style="position:absolute;left:761.00px;top:642.00px;width:149.00px;height:39.00px;background:#fff;border:1px solid #e4e4e4;box-sizing:border-box;border-radius:2px"></div>
<div class="t" style="left:775.00px;top:654.58px;font-size:14.2px;line-height:17px;font-weight:400;color:#222;">Verdensbasis</div>
<svg style="position:absolute;left:888.50px;top:652.00px;" width="16" height="16" viewBox="0 0 16 16"><path d="M2,5 L8,11 L14,5" fill="none" stroke="#111" stroke-width="2"/></svg>
<div style="position:absolute;left:918.40px;top:642.00px;width:149.20px;height:39.00px;background:#fff;border:1px solid #e4e4e4;box-sizing:border-box;border-radius:2px"></div>
<div style="position:absolute;left:931.9px;top:650px;width:102.10000000000002px;height:26px;overflow:hidden"><div class="t" style="left:0;top:-8.84px"></div></div>
<div class="t" style="left:932.40px;top:654.58px;font-size:14.2px;line-height:17px;font-weight:400;color:#222;width:101.60000000000002px;overflow:hidden">Unike besøkere</div>
<svg style="position:absolute;left:1046.10px;top:652.00px;" width="16" height="16" viewBox="0 0 16 16"><path d="M2,5 L8,11 L14,5" fill="none" stroke="#111" stroke-width="2"/></svg>
<div class="card" style="left:362px;top:750px;width:774px;height:721px;"></div>
<div class="t" style="left:392.60px;top:785.20px;font-size:35.5px;line-height:43px;font-weight:400;color:#1a1a1a;">Kontinent</div>
<div style="position:absolute;left:362.00px;top:852.30px;width:774.00px;height:65.40px;background:#eef0f2"></div>
<div class="t" style="left:392.60px;top:876.75px;font-size:16.6px;line-height:20px;font-weight:400;color:#37474f;transform:scaleX(0.9151);transform-origin:left center;">KONTINENT</div>
<div class="t" style="right:864.00px;top:876.75px;font-size:16.6px;line-height:20px;font-weight:400;color:#37474f;transform:scaleX(0.8475);transform-origin:right center;">UNIKE BESØKERE</div>
<svg style="position:absolute;left:958.30px;top:882.10px;" width="15" height="10" viewBox="0 0 15 10"><path d="M0.5,0.8 L14,0.8 L7.25,8.8 Z" fill="#43a047"/></svg>
<div style="position:absolute;left:362.00px;top:974.15px;width:774.00px;height:1.00px;background:#eceef0"></div>
<div class="t" style="left:392.60px;top:936.18px;font-size:19.4px;line-height:23px;font-weight:400;color:#262626;">Europa</div>
<div class="t" style="right:863.50px;top:936.18px;font-size:19.4px;line-height:23px;font-weight:400;color:#262626;">349</div>
<div style="position:absolute;left:362.00px;top:1031.60px;width:774.00px;height:1.00px;background:#eceef0"></div>
<div class="t" style="left:392.60px;top:993.63px;font-size:19.4px;line-height:23px;font-weight:400;color:#262626;">Asia</div>
<div class="t" style="right:863.50px;top:993.63px;font-size:19.4px;line-height:23px;font-weight:400;color:#262626;">120</div>
<div style="position:absolute;left:362.00px;top:1089.05px;width:774.00px;height:1.00px;background:#eceef0"></div>
<div class="t" style="left:392.60px;top:1051.08px;font-size:19.4px;line-height:23px;font-weight:400;color:#262626;">Nord-Amerika</div>
<div class="t" style="right:863.50px;top:1051.08px;font-size:19.4px;line-height:23px;font-weight:400;color:#262626;">60</div>
<div style="position:absolute;left:362.00px;top:1146.50px;width:774.00px;height:1.00px;background:#eceef0"></div>
<div class="t" style="left:392.60px;top:1108.53px;font-size:19.4px;line-height:23px;font-weight:400;color:#262626;">Afrika</div>
<div class="t" style="right:863.50px;top:1108.53px;font-size:19.4px;line-height:23px;font-weight:400;color:#262626;">39</div>
<div style="position:absolute;left:362.00px;top:1203.95px;width:774.00px;height:1.00px;background:#eceef0"></div>
<div class="t" style="left:392.60px;top:1165.98px;font-size:19.4px;line-height:23px;font-weight:400;color:#262626;">Mellom-Amerika</div>
<div class="t" style="right:863.50px;top:1165.98px;font-size:19.4px;line-height:23px;font-weight:400;color:#262626;">21</div>
<div style="position:absolute;left:362.00px;top:1261.40px;width:774.00px;height:1.00px;background:#eceef0"></div>
<div class="t" style="left:392.60px;top:1223.43px;font-size:19.4px;line-height:23px;font-weight:400;color:#262626;">Oseania</div>
<div class="t" style="right:863.50px;top:1223.43px;font-size:19.4px;line-height:23px;font-weight:400;color:#262626;">17</div>
<div style="position:absolute;left:362.00px;top:1318.85px;width:774.00px;height:1.00px;background:#eceef0"></div>
<div class="t" style="left:392.60px;top:1280.88px;font-size:19.4px;line-height:23px;font-weight:400;color:#262626;">Sør-Amerika</div>
<div class="t" style="right:863.50px;top:1280.88px;font-size:19.4px;line-height:23px;font-weight:400;color:#262626;">9</div>
<div style="position:absolute;left:362.00px;top:1376.30px;width:774.00px;height:1.00px;background:#eceef0"></div>
<div class="t" style="left:392.60px;top:1338.33px;font-size:19.4px;line-height:23px;font-weight:400;color:#262626;">Antarktis</div>
<div class="t" style="right:863.50px;top:1338.33px;font-size:19.4px;line-height:23px;font-weight:400;color:#262626;">1</div>
<div class="card" style="left:362px;top:1496px;width:774px;height:128.5px;"></div>
<svg style="position:absolute;left:390.00px;top:1535.00px;" width="145" height="45" viewBox="0 0 145 45"><polyline points="5,39 132.6,39 135.5,10" fill="none" stroke="#6b7a9a" stroke-width="1.2"/><circle cx="132.6" cy="39" r="3.5" fill="#f56565"/><circle cx="135.5" cy="10" r="2.6" fill="#4a90e2"/></svg>
<div class="t" style="left:544.30px;top:1549.22px;font-size:21px;line-height:25px;font-weight:400;color:#262626;"><b>138</b> bestemte land</div>
<div class="card" style="left:362px;top:1648.5px;width:774px;height:151.5px;"></div>
<div class="t" style="left:392.60px;top:1683.70px;font-size:35.5px;line-height:43px;font-weight:400;color:#1a1a1a;">Nettleserspråk</div>
<div class="card" style="left:1172px;top:204px;width:773px;height:593px;"></div>
<div class="t" style="left:1202.60px;top:239.20px;font-size:35.5px;line-height:43px;font-weight:400;color:#1a1a1a;">Land</div>
<div style="position:absolute;left:1172.00px;top:306.30px;width:773.00px;height:65.40px;background:#eef0f2"></div>
<div class="t" style="left:1202.60px;top:330.75px;font-size:16.6px;line-height:20px;font-weight:400;color:#37474f;transform:scaleX(0.9318);transform-origin:left center;">LAND</div>
<div class="t" style="right:55.00px;top:330.75px;font-size:16.6px;line-height:20px;font-weight:400;color:#37474f;transform:scaleX(0.8475);transform-origin:right center;">UNIKE BESØKERE</div>
<svg style="position:absolute;left:1767.30px;top:336.10px;" width="15" height="10" viewBox="0 0 15 10"><path d="M0.5,0.8 L14,0.8 L7.25,8.8 Z" fill="#43a047"/></svg>
<div style="position:absolute;left:1172.00px;top:428.15px;width:773.00px;height:1.00px;background:#eceef0"></div>
<svg style="position:absolute;left:1203.00px;top:387.30px;" width="34" height="25" viewBox="0 0 34 25"><rect x="0.5" y="0.5" width="33" height="24" fill="#fff" stroke="#d6d6d6"/><g transform="translate(1,1)"><rect width="32" height="23" fill="#012169"/><path d="M0,0 L32,23 M32,0 L0,23" stroke="#fff" stroke-width="4.6"/><path d="M0,0 L32,23 M32,0 L0,23" stroke="#c8102e" stroke-width="1.6"/><path d="M16,0 V23 M0,11.5 H32" stroke="#fff" stroke-width="7"/><path d="M16,0 V23 M0,11.5 H32" stroke="#c8102e" stroke-width="4"/></g></svg>
<div class="t" style="left:1257.00px;top:390.18px;font-size:19.4px;line-height:23px;font-weight:400;color:#262626;">Storbritannia</div>
<div class="t" style="right:54.50px;top:390.18px;font-size:19.4px;line-height:23px;font-weight:400;color:#262626;">103</div>
<div style="position:absolute;left:1172.00px;top:485.60px;width:773.00px;height:1.00px;background:#eceef0"></div>
<svg style="position:absolute;left:1203.00px;top:444.75px;" width="34" height="25" viewBox="0 0 34 25"><rect x="0.5" y="0.5" width="33" height="24" fill="#fff" stroke="#d6d6d6"/><rect x="1" y="1" width="10.7" height="23" fill="#002654"/><rect x="22.3" y="1" width="10.7" height="23" fill="#ce1126"/></svg>
<div class="t" style="left:1257.00px;top:447.63px;font-size:19.4px;line-height:23px;font-weight:400;color:#262626;">Frankrike</div>
<div class="t" style="right:54.50px;top:447.63px;font-size:19.4px;line-height:23px;font-weight:400;color:#262626;">70</div>
<div style="position:absolute;left:1172.00px;top:543.05px;width:773.00px;height:1.00px;background:#eceef0"></div>
<svg style="position:absolute;left:1203.00px;top:502.20px;" width="34" height="25" viewBox="0 0 34 25"><rect x="0.5" y="0.5" width="33" height="24" fill="#fff" stroke="#d6d6d6"/><rect x="1" y="1.00" width="32" height="1.77" fill="#b22234"/><rect x="1" y="4.54" width="32" height="1.77" fill="#b22234"/><rect x="1" y="8.08" width="32" height="1.77" fill="#b22234"/><rect x="1" y="11.62" width="32" height="1.77" fill="#b22234"/><rect x="1" y="15.15" width="32" height="1.77" fill="#b22234"/><rect x="1" y="18.69" width="32" height="1.77" fill="#b22234"/><rect x="1" y="22.23" width="32" height="1.77" fill="#b22234"/><rect x="1" y="1" width="16" height="12.4" fill="#3c3b6e"/><circle cx="2.50" cy="2.40" r="0.45" fill="#fff"/><circle cx="2.50" cy="4.75" r="0.45" fill="#fff"/><circle cx="2.50" cy="7.10" r="0.45" fill="#fff"/><circle cx="2.50" cy="9.45" r="0.45" fill="#fff"/><circle cx="2.50" cy="11.80" r="0.45" fill="#fff"/><circle cx="5.15" cy="2.40" r="0.45" fill="#fff"/><circle cx="5.15" cy="4.75" r="0.45" fill="#fff"/><circle cx="5.15" cy="7.10" r="0.45" fill="#fff"/><circle cx="5.15" cy="9.45" r="0.45" fill="#fff"/><circle cx="5.15" cy="11.80" r="0.45" fill="#fff"/><circle cx="7.80" cy="2.40" r="0.45" fill="#fff"/><circle cx="7.80" cy="4.75" r="0.45" fill="#fff"/><circle cx="7.80" cy="7.10" r="0.45" fill="#fff"/><circle cx="7.80" cy="9.45" r="0.45" fill="#fff"/><circle cx="7.80" cy="11.80" r="0.45" fill="#fff"/><circle cx="10.45" cy="2.40" r="0.45" fill="#fff"/><circle cx="10.45" cy="4.75" r="0.45" fill="#fff"/><circle cx="10.45" cy="7.10" r="0.45" fill="#fff"/><circle cx="10.45" cy="9.45" r="0.45" fill="#fff"/><circle cx="10.45" cy="11.80" r="0.45" fill="#fff"/><circle cx="13.10" cy="2.40" r="0.45" fill="#fff"/><circle cx="13.10" cy="4.75" r="0.45" fill="#fff"/><circle cx="13.10" cy="7.10" r="0.45" fill="#fff"/><circle cx="13.10" cy="9.45" r="0.45" fill="#fff"/><circle cx="13.10" cy="11.80" r="0.45" fill="#fff"/><circle cx="15.75" cy="2.40" r="0.45" fill="#fff"/><circle cx="15.75" cy="4.75" r="0.45" fill="#fff"/><circle cx="15.75" cy="7.10" r="0.45" fill="#fff"/><circle cx="15.75" cy="9.45" r="0.45" fill="#fff"/><circle cx="15.75" cy="11.80" r="0.45" fill="#fff"/></svg>
<div class="t" style="left:1257.00px;top:505.08px;font-size:19.4px;line-height:23px;font-weight:400;color:#262626;">USA</div>
<div class="t" style="right:54.50px;top:505.08px;font-size:19.4px;line-height:23px;font-weight:400;color:#262626;">57</div>
<div style="position:absolute;left:1172.00px;top:600.50px;width:773.00px;height:1.00px;background:#eceef0"></div>
<svg style="position:absolute;left:1203.00px;top:559.65px;" width="34" height="25" viewBox="0 0 34 25"><rect x="0.5" y="0.5" width="33" height="24" fill="#fff" stroke="#d6d6d6"/><rect x="1" y="12.5" width="32" height="11.5" fill="#dc143c"/></svg>
<div class="t" style="left:1257.00px;top:562.53px;font-size:19.4px;line-height:23px;font-weight:400;color:#262626;">Polen</div>
<div class="t" style="right:54.50px;top:562.53px;font-size:19.4px;line-height:23px;font-weight:400;color:#262626;">49</div>
<div style="position:absolute;left:1172.00px;top:657.95px;width:773.00px;height:1.00px;background:#eceef0"></div>
<svg style="position:absolute;left:1203.00px;top:617.10px;" width="34" height="25" viewBox="0 0 34 25"><rect x="0.5" y="0.5" width="33" height="24" fill="#fff" stroke="#d6d6d6"/><rect x="1" y="3.2" width="32" height="2.6" fill="#0038b8"/><rect x="1" y="19.2" width="32" height="2.6" fill="#0038b8"/><path d="M17,8 L20.5,14 L13.5,14 Z M17,16.4 L20.5,10.4 L13.5,10.4 Z" fill="none" stroke="#0038b8" stroke-width="0.9"/></svg>
<div class="t" style="left:1257.00px;top:619.98px;font-size:19.4px;line-height:23px;font-weight:400;color:#262626;">Israel</div>
<div class="t" style="right:54.50px;top:619.98px;font-size:19.4px;line-height:23px;font-weight:400;color:#262626;">47</div>
<div class="t" style="left:1521.40px;top:681.51px;font-size:18.6px;line-height:22px;font-weight:400;color:#262626;">1–5 av 138</div>
<div class="t" style="left:1640.00px;top:681.51px;font-size:18.6px;line-height:22px;font-weight:400;color:#1976d2;">Neste ›</div>
<div class="card" style="left:1172px;top:821px;width:773px;height:592.5px;"></div>
<div class="t" style="left:1202.60px;top:856.20px;font-size:35.5px;line-height:43px;font-weight:400;color:#1a1a1a;">Region</div>
<div style="position:absolute;left:1172.00px;top:923.30px;width:773.00px;height:65.40px;background:#eef0f2"></div>
<div class="t" style="left:1202.60px;top:947.75px;font-size:16.6px;line-height:20px;font-weight:400;color:#37474f;transform:scaleX(0.8811);transform-origin:left center;">REGION</div>
<div class="t" style="right:55.00px;top:947.75px;font-size:16.6px;line-height:20px;font-weight:400;color:#37474f;transform:scaleX(0.8475);transform-origin:right center;">UNIKE BESØKERE</div>
<svg style="position:absolute;left:1767.30px;top:953.10px;" width="15" height="10" viewBox="0 0 15 10"><path d="M0.5,0.8 L14,0.8 L7.25,8.8 Z" fill="#43a047"/></svg>
<div style="position:absolute;left:1172.00px;top:1045.15px;width:773.00px;height:1.00px;background:#eceef0"></div>
<svg style="position:absolute;left:1203.00px;top:1004.30px;" width="34" height="25" viewBox="0 0 34 25"><rect x="0.5" y="0.5" width="33" height="24" fill="#fff" stroke="#cfcfcf"/><text x="17" y="19.6" text-anchor="middle" font-family="Liberation Sans" font-weight="700" font-size="18.5" fill="#111">?</text></svg>
<div class="t" style="left:1257.00px;top:1007.18px;font-size:19.4px;line-height:23px;font-weight:400;color:#262626;">Ukjent</div>
<div class="t" style="right:54.50px;top:1007.18px;font-size:19.4px;line-height:23px;font-weight:400;color:#262626;">213</div>
<div style="position:absolute;left:1172.00px;top:1102.60px;width:773.00px;height:1.00px;background:#eceef0"></div>
<svg style="position:absolute;left:1203.00px;top:1061.75px;" width="34" height="25" viewBox="0 0 34 25"><rect x="0.5" y="0.5" width="33" height="24" fill="#fff" stroke="#d6d6d6"/><g transform="translate(1,1)"><rect width="32" height="23" fill="#012169"/><path d="M0,0 L32,23 M32,0 L0,23" stroke="#fff" stroke-width="4.6"/><path d="M0,0 L32,23 M32,0 L0,23" stroke="#c8102e" stroke-width="1.6"/><path d="M16,0 V23 M0,11.5 H32" stroke="#fff" stroke-width="7"/><path d="M16,0 V23 M0,11.5 H32" stroke="#c8102e" stroke-width="4"/></g></svg>
<div class="t" style="left:1257.00px;top:1064.63px;font-size:19.4px;line-height:23px;font-weight:400;color:#262626;">England, Storbritannia</div>
<div class="t" style="right:54.50px;top:1064.63px;font-size:19.4px;line-height:23px;font-weight:400;color:#262626;">99</div>
<div style="position:absolute;left:1172.00px;top:1160.05px;width:773.00px;height:1.00px;background:#eceef0"></div>
<svg style="position:absolute;left:1203.00px;top:1119.20px;" width="34" height="25" viewBox="0 0 34 25"><rect x="0.5" y="0.5" width="33" height="24" fill="#fff" stroke="#d6d6d6"/><rect x="1" y="1" width="10.7" height="23" fill="#002654"/><rect x="22.3" y="1" width="10.7" height="23" fill="#ce1126"/></svg>
<div class="t" style="left:1257.00px;top:1122.08px;font-size:19.4px;line-height:23px;font-weight:400;color:#262626;">Île-de-France, Frankrike</div>
<div class="t" style="right:54.50px;top:1122.08px;font-size:19.4px;line-height:23px;font-weight:400;color:#262626;">39</div>
<div style="position:absolute;left:1172.00px;top:1217.50px;width:773.00px;height:1.00px;background:#eceef0"></div>
<svg style="position:absolute;left:1203.00px;top:1176.65px;" width="34" height="25" viewBox="0 0 34 25"><rect x="0.5" y="0.5" width="33" height="24" fill="#fff" stroke="#d6d6d6"/><rect x="1" y="1" width="32" height="23" fill="#c60b1e"/><rect x="1" y="6.75" width="32" height="11.5" fill="#ffc400"/><rect x="8" y="9" width="4.5" height="6" fill="#ad1519" opacity="0.8"/></svg>
<div class="t" style="left:1257.00px;top:1179.53px;font-size:19.4px;line-height:23px;font-weight:400;color:#262626;">Madrid, Spania</div>
<div class="t" style="right:54.50px;top:1179.53px;font-size:19.4px;line-height:23px;font-weight:400;color:#262626;">14</div>
<div style="position:absolute;left:1172.00px;top:1274.95px;width:773.00px;height:1.00px;background:#eceef0"></div>
<svg style="position:absolute;left:1203.00px;top:1234.10px;" width="34" height="25" viewBox="0 0 34 25"><rect x="0.5" y="0.5" width="33" height="24" fill="#fff" stroke="#d6d6d6"/><rect x="1" y="1.00" width="32" height="1.77" fill="#b22234"/><rect x="1" y="4.54" width="32" height="1.77" fill="#b22234"/><rect x="1" y="8.08" width="32" height="1.77" fill="#b22234"/><rect x="1" y="11.62" width="32" height="1.77" fill="#b22234"/><rect x="1" y="15.15" width="32" height="1.77" fill="#b22234"/><rect x="1" y="18.69" width="32" height="1.77" fill="#b22234"/><rect x="1" y="22.23" width="32" height="1.77" fill="#b22234"/><rect x="1" y="1" width="16" height="12.4" fill="#3c3b6e"/><circle cx="2.50" cy="2.40" r="0.45" fill="#fff"/><circle cx="2.50" cy="4.75" r="0.45" fill="#fff"/><circle cx="2.50" cy="7.10" r="0.45" fill="#fff"/><circle cx="2.50" cy="9.45" r="0.45" fill="#fff"/><circle cx="2.50" cy="11.80" r="0.45" fill="#fff"/><circle cx="5.15" cy="2.40" r="0.45" fill="#fff"/><circle cx="5.15" cy="4.75" r="0.45" fill="#fff"/><circle cx="5.15" cy="7.10" r="0.45" fill="#fff"/><circle cx="5.15" cy="9.45" r="0.45" fill="#fff"/><circle cx="5.15" cy="11.80" r="0.45" fill="#fff"/><circle cx="7.80" cy="2.40" r="0.45" fill="#fff"/><circle cx="7.80" cy="4.75" r="0.45" fill="#fff"/><circle cx="7.80" cy="7.10" r="0.45" fill="#fff"/><circle cx="7.80" cy="9.45" r="0.45" fill="#fff"/><circle cx="7.80" cy="11.80" r="0.45" fill="#fff"/><circle cx="10.45" cy="2.40" r="0.45" fill="#fff"/><circle cx="10.45" cy="4.75" r="0.45" fill="#fff"/><circle cx="10.45" cy="7.10" r="0.45" fill="#fff"/><circle cx="10.45" cy="9.45" r="0.45" fill="#fff"/><circle cx="10.45" cy="11.80" r="0.45" fill="#fff"/><circle cx="13.10" cy="2.40" r="0.45" fill="#fff"/><circle cx="13.10" cy="4.75" r="0.45" fill="#fff"/><circle cx="13.10" cy="7.10" r="0.45" fill="#fff"/><circle cx="13.10" cy="9.45" r="0.45" fill="#fff"/><circle cx="13.10" cy="11.80" r="0.45" fill="#fff"/><circle cx="15.75" cy="2.40" r="0.45" fill="#fff"/><circle cx="15.75" cy="4.75" r="0.45" fill="#fff"/><circle cx="15.75" cy="7.10" r="0.45" fill="#fff"/><circle cx="15.75" cy="9.45" r="0.45" fill="#fff"/><circle cx="15.75" cy="11.80" r="0.45" fill="#fff"/></svg>
<div class="t" style="left:1257.00px;top:1236.98px;font-size:19.4px;line-height:23px;font-weight:400;color:#262626;">Illinois, USA</div>
<div class="t" style="right:54.50px;top:1236.98px;font-size:19.4px;line-height:23px;font-weight:400;color:#262626;">7</div>
<div class="t" style="left:1521.40px;top:1298.51px;font-size:18.6px;line-height:22px;font-weight:400;color:#262626;">1–5 av 198</div>
<div class="t" style="left:1640.00px;top:1298.51px;font-size:18.6px;line-height:22px;font-weight:400;color:#1976d2;">Neste ›</div>
<div class="card" style="left:1172px;top:1437.5px;width:773px;height:462.5px;"></div>
<div class="t" style="left:1202.60px;top:1472.70px;font-size:35.5px;line-height:43px;font-weight:400;color:#1a1a1a;">By</div>
<div style="position:absolute;left:1172.00px;top:1539.80px;width:773.00px;height:65.40px;background:#eef0f2"></div>
<div class="t" style="left:1202.60px;top:1564.25px;font-size:16.6px;line-height:20px;font-weight:400;color:#37474f;transform:scaleX(0.8077);transform-origin:left center;">BY</div>
<div class="t" style="right:55.00px;top:1564.25px;font-size:16.6px;line-height:20px;font-weight:400;color:#37474f;transform:scaleX(0.8475);transform-origin:right center;">UNIKE BESØKERE</div>
<svg style="position:absolute;left:1767.30px;top:1569.60px;" width="15" height="10" viewBox="0 0 15 10"><path d="M0.5,0.8 L14,0.8 L7.25,8.8 Z" fill="#43a047"/></svg>
<div style="position:absolute;left:1172.00px;top:1661.65px;width:773.00px;height:1.00px;background:#eceef0"></div>
<svg style="position:absolute;left:1203.00px;top:1620.80px;" width="34" height="25" viewBox="0 0 34 25"><rect x="0.5" y="0.5" width="33" height="24" fill="#fff" stroke="#d6d6d6"/><g transform="translate(1,1)"><rect width="32" height="23" fill="#012169"/><path d="M0,0 L32,23 M32,0 L0,23" stroke="#fff" stroke-width="4.6"/><path d="M0,0 L32,23 M32,0 L0,23" stroke="#c8102e" stroke-width="1.6"/><path d="M16,0 V23 M0,11.5 H32" stroke="#fff" stroke-width="7"/><path d="M16,0 V23 M0,11.5 H32" stroke="#c8102e" stroke-width="4"/></g></svg>
<div class="t" style="left:1257.00px;top:1623.68px;font-size:19.4px;line-height:23px;font-weight:400;color:#262626;">London, England, Storbritannia</div>
<div class="t" style="right:54.50px;top:1623.68px;font-size:19.4px;line-height:23px;font-weight:400;color:#262626;">61</div>
<div style="position:absolute;left:1172.00px;top:1719.10px;width:773.00px;height:1.00px;background:#eceef0"></div>
<svg style="position:absolute;left:1203.00px;top:1678.25px;" width="34" height="25" viewBox="0 0 34 25"><rect x="0.5" y="0.5" width="33" height="24" fill="#fff" stroke="#d6d6d6"/><rect x="1" y="1" width="10.7" height="23" fill="#002654"/><rect x="22.3" y="1" width="10.7" height="23" fill="#ce1126"/></svg>
<div class="t" style="left:1257.00px;top:1681.13px;font-size:19.4px;line-height:23px;font-weight:400;color:#262626;">Paris, Île-de-France, Frankrike</div>
<div class="t" style="right:54.50px;top:1681.13px;font-size:19.4px;line-height:23px;font-weight:400;color:#262626;">30</div>
<div style="position:absolute;left:1172.00px;top:1776.55px;width:773.00px;height:1.00px;background:#eceef0"></div>
<svg style="position:absolute;left:1203.00px;top:1735.70px;" width="34" height="25" viewBox="0 0 34 25"><rect x="0.5" y="0.5" width="33" height="24" fill="#fff" stroke="#d6d6d6"/><g transform="translate(1,1)"><rect width="32" height="23" fill="#012169"/><path d="M0,0 L32,23 M32,0 L0,23" stroke="#fff" stroke-width="4.6"/><path d="M0,0 L32,23 M32,0 L0,23" stroke="#c8102e" stroke-width="1.6"/><path d="M16,0 V23 M0,11.5 H32" stroke="#fff" stroke-width="7"/><path d="M16,0 V23 M0,11.5 H32" stroke="#c8102e" stroke-width="4"/></g></svg>
<div class="t" style="left:1257.00px;top:1738.58px;font-size:19.4px;line-height:23px;font-weight:400;color:#262626;"></div>
<div class="t" style="right:54.50px;top:1738.58px;font-size:19.4px;line-height:23px;font-weight:400;color:#262626;"></div>
</div></body></html>
